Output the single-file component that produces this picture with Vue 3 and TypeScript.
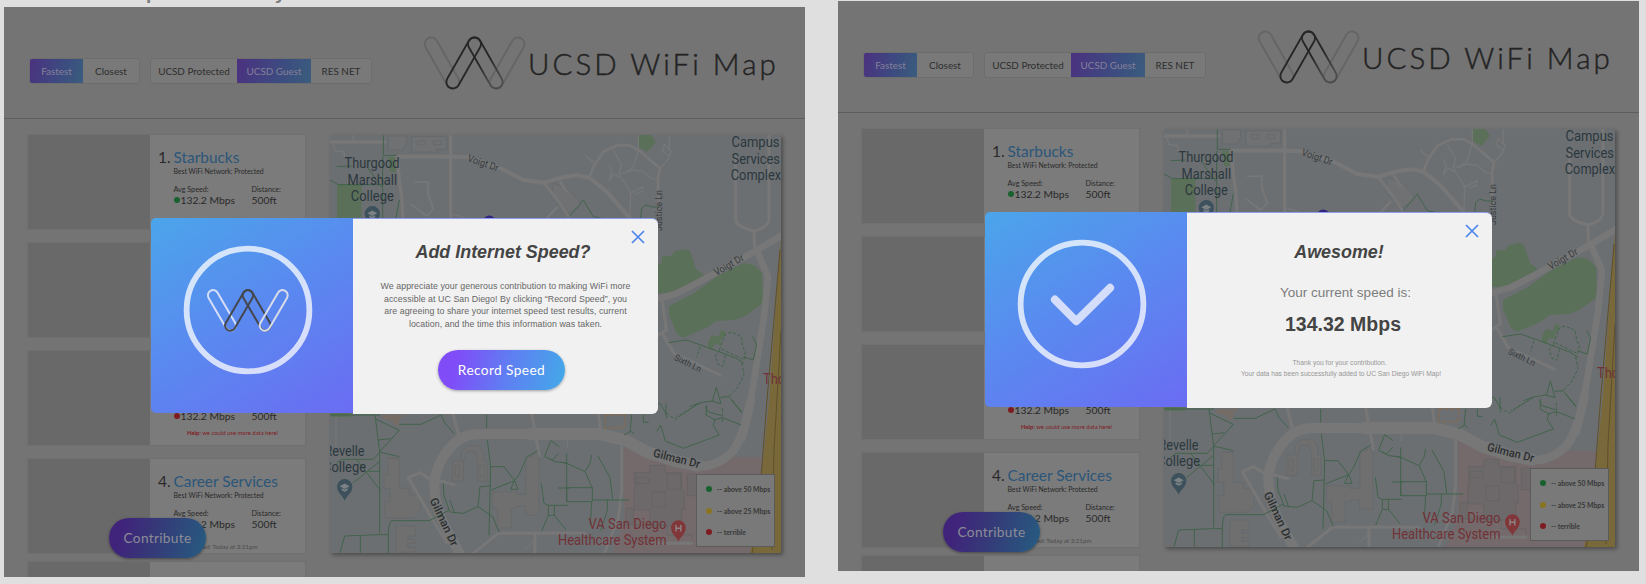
<script setup lang="ts">
interface Place {
  rank?: string
  name?: string
  network?: string
  status?: 'good' | 'fair' | 'bad'
  help?: boolean
  updated?: string
}
interface Screen {
  id: string
  kind: 'record' | 'success'
}

const screens: Screen[] = [
  { id: 'record', kind: 'record' },
  { id: 'success', kind: 'success' },
]
const places: Place[] = [
  { rank: '1.', name: 'Starbucks', network: 'Best WiFi Network: Protected', status: 'good' },
  {},
  { status: 'bad', help: true },
  { rank: '4.', name: 'Career Services', network: 'Best WiFi Network: Protected', status: 'fair', updated: 'Updated: Today at 3:21pm' },
  {},
]
const legend = [
  { status: 'good', label: '-- above 50 Mbps' },
  { status: 'fair', label: '-- above 25 Mbps' },
  { status: 'bad', label: '-- terrible' },
]
const paragraph = [
  'We appreciate your generous contribution to making WiFi more',
  'accessible at UC San Diego! By clicking “Record Speed”, you',
  'are agreeing to share your internet speed test results, current',
  'location, and the time this information was taken.',
]
</script>

<template>
  <div class="board">
    <svg class="caption" width="300" height="4" viewBox="0 0 300 4">
      <text x="146" y="-1">p</text>
      <text x="275" y="-1">y</text>
    </svg>

    <section v-for="s in screens" :key="s.id" class="screen" :class="s.kind">
      <header class="top">
        <div class="group sort">
          <span class="seg on">Fastest</span><span class="seg">Closest</span>
        </div>
        <div class="group nets">
          <span class="seg">UCSD Protected</span><span class="seg on">UCSD Guest</span><span class="seg">RES NET</span>
        </div>
        <div class="brand">
          <svg class="logo" width="104" height="54" viewBox="422.5 35.5 104 54">
            <defs>
              <linearGradient :id="'fade-' + s.id" x1="0" y1="0" x2="0" y2="1">
                <stop offset=".45" stop-color="#262626" />
                <stop offset=".85" stop-color="#4c4c4c" />
              </linearGradient>
            </defs>
            <g fill="none" stroke-width="1.8">
              <rect x="-6.5" y="-6.5" width="13" height="56.7" rx="6.5" stroke="#656565" transform="translate(430.7 43.5) rotate(-29.7)" />
              <rect x="-6.5" y="-6.5" width="13" height="56.7" rx="6.5" stroke="#656565" transform="translate(517.5 43.5) rotate(29.7)" />
              <rect x="-6.5" y="-6.5" width="13" height="56.7" rx="6.5" :stroke="'url(#fade-' + s.id + ')'" transform="translate(474 43.5) rotate(-29.7)" />
              <rect x="-6.5" y="-6.5" width="13" height="56.7" rx="6.5" stroke="#262626" transform="translate(474 43.5) rotate(29.7)" />
            </g>
          </svg>
          <span class="wordmark">UCSD WiFi Map</span>
        </div>
      </header>

      <div class="content">
        <div class="list">
          <article v-for="(p, i) in places" :key="i" class="card">
            <div class="photo"></div>
            <div class="info">
              <div class="title"><span class="rank">{{ p.rank }}</span><span class="name">{{ p.name }}</span></div>
              <div class="network">{{ p.network }}</div>
              <div v-if="p.status" class="stats">
                <div class="stat speed">
                  <span class="label">Avg Speed:</span>
                  <span class="value"><i class="dot" :class="p.status"></i>132.2 Mbps</span>
                </div>
                <div class="stat">
                  <span class="label">Distance:</span>
                  <span class="value">500ft</span>
                </div>
              </div>
              <div v-if="p.help" class="help"><b>Help</b>: we could use more data here!</div>
              <div v-if="p.updated" class="updated">{{ p.updated }}</div>
            </div>
          </article>
        </div>

        <div class="map">
          <svg width="451" height="418" viewBox="330 135 451 418">
            <rect x="330" y="135" width="451" height="418" fill="#6c6f72" />
            <!-- parks and campus areas -->
            <g fill="#5b7058">
              <path d="M337 184h24.5v50H337zM388 157h7l1 15h-6zM331 400h20v17h-20z" />
              <path d="M638 135h13l5 7-9 10-8-5z" />
              <path d="M650 267l8-2 4-3 0-6h9l4-5 11-2 4 2 6 18 8 6-2 3-9 3-11 10-13 2h-15z" />
              <path d="M669 306l25-13 25-18 25-12 10 2 8 8 1 27-1 4-17 12-10 4-19 1-8 6-25 11-6-4-8-19z" />
              <path d="M708 342l4-7 7 2 2-7 4 1 0 5-4 3 0 6-6-1-3 6-4-2z" />
            </g>
            <path d="M624 447l20 1 20 10 45 8 12-9h60v96H612l12-30z" fill="#746a6b" />
            <!-- buildings -->
            <g transform="translate(320 120) scale(.33333)" fill="#707172" stroke="#646769" stroke-width="2">
              <path d="M205 48h55v22l-10 20h-45zM275 50h105v38h-30v8h-75zM293 62h22v12h-22zM340 62h22v12h-22z" />
              <path d="M700 190l50 20 35 45-40 25-50-45z" />
            </g>
            <g transform="translate(320 400) scale(.33333)" fill="#6f6f6f" stroke="#656768" stroke-width="2">
              <path d="M203 175h35v90h30v20h32v50l-20 20h-85v-50h15v-40h-18v-40h12z" />
              <path d="M398 182h26v-25l20-20h32l15 20v25h10v62h-28v-62l-8-28h-25l-10 28v62h-32zM406 195h12v35h-12zM480 195h12v35h-12z" />
              <path d="M518 275h72v8h28v-112h20v-10h15v10h4v175h-40v-28h-26v6h-18v60h-40v-60h-16z" />
              <path d="M228 378h57v30h-22v10h22v12h-22v12h22v14h-57z" />
            </g>
            <g transform="translate(560 400) scale(.33333)" fill="#6d696a" stroke="#626162" stroke-width="2">
              <path d="M222 218h48v-22h45v22h50v55h8v55h-8v50h-95v-48h-48v-60h4zM228 232h38v18h-38zM322 222h40v45h-40zM276 275h40v45h-40zM382 222h28v65h-28zM198 325h22v50h-22z" />
              <path d="M135 45h62l-4 38h-58z" fill="none" stroke="#7b6c5e" stroke-dasharray="12 5" stroke-width="6" />
              <path d="M222 375h100v30h75v15" fill="none" />
            </g>
            <path d="M383 415h22l-5 3-2 9-8-7-7-1z" fill="#756c66" />
            <!-- freeway -->
            <path d="M781 238v315h-31l2-10 7-40 10-103z" fill="#79683a" />
            <path d="M780 250l-13 150-10 130-5 23M781 330l-7 120-2 100" fill="none" stroke="#5f5029" stroke-width="1" />
            <!-- streets -->
            <g fill="none" stroke="#777777" stroke-linecap="round" stroke-linejoin="round">
              <g transform="translate(320 120) scale(.33333)">
                <path d="M30 66h165M232 110l7 80 6 40 4 65M392 47v250" stroke-width="10" />
                <path d="M100 46v20M38 72l8 20 26 4 2 16M280 187l45-1-3 35 18 48-22 20-45-37M392 280l60 20" stroke-width="4" />
              </g>
              <g transform="translate(400 0) scale(.33333)">
                <path d="M-8 470h165l48 2 95 32 70 36 62 8 60-17 40-5 36 7 52 42 70 80" stroke-width="12" />
                <path d="M432 548l46 60 32 48M440 655l30-32M568 532l14-35 28-42 45-20 35 1 26 15 64 54-6 30 2 120M480 545l20 30" stroke-width="8" />
                <path d="M640 452l25 40-8 30 35 55-2 80M665 520l35-10 30 4 25 22 20 3M715 450l-15 50-25 20M780 505l25-28 8-22-20-22-6 20 20 15M560 470l22 18M628 497l8 15-8 30 14-20 16 10M690 580l40-20-4 14-20 8M715 407v43M808 407v40M40 548l42-2 2 30 16 50-18 22-48-35" stroke-width="4" />
              </g>
              <g transform="translate(560 120) scale(.33333)">
                <path d="M527 110v190q2 20 55 33q40-10 45-33V46M582 333l2 50" stroke-width="9" />
                <path d="M663 348l-85 50-180 98-50 25-52 15M590 390l34 80-12 120-28 180-24 140-12 45" stroke-width="20" />
                <path d="M305 530l14 100-24 16M310 645l32 55 138 65" stroke-width="9" />
              </g>
              <g transform="translate(320 400) scale(.33333)">
                <path d="M430 480l-50-90q-38-75-37-140q5-60 50-110q35-38 80-38h230" stroke-width="30" />
                <path d="M630 102h210l78 20 65 35 90 28 60 12" stroke-width="36" />
                <path d="M1120 197q70 10 120-45 30-40 52-150" stroke-width="26" />
                <path d="M400 45l16 60M636 45l22 122M835 40l8 60M905 140v130l-10 85-40 100M460 460l75-60h260M645 405v50M330 238l-30-20-35 15 75 130 40 65M350 240l52 14" stroke-width="9" />
                <path d="M48 50v90M645 420l-30 26M742 120v20" stroke-width="3" />
                <path d="M1000 430h115" stroke-width="9" />
              </g>
            </g>
            <!-- footpaths -->
            <g fill="none" stroke="#41634b" stroke-width="3">
              <g transform="translate(320 120) scale(.33333)">
                <path d="M190 46v60h40M50 140l45-2M30 180l25 14h130M142 142l44 60M188 110v185M238 240l-10 55" />
              </g>
              <g transform="translate(560 120) scale(.33333)">
                <path d="M28 290l42-50 30 50 25 5M242 295l3-30 12-10 20 6h20M325 668l55-8 62 22 85 32 26 16M578 650l12 22-10 48-30-10M388 860l35-12 34-5 12-42 14 50-28-8M482 832l25-2 38 46M250 855l50-5 15 25 6 20M436 860l8 15 40 12" />
                <path d="M478 690l18-48 18-6 30 14 4 30 8 14-4 25-30-14-38-18-18 20 8 26 14 6 10-40M420 680l-10 32M545 728l7 36-20 40-25 25M420 850l-70 40" stroke-dasharray="10 5" />
              </g>
              <g transform="translate(320 400) scale(.33333)">
                <path d="M30 45h150M165 45l14 110v245M166 57l72 34-60 65 60 14M175 120l36-4M238 73h65l60-28 12 25 28 32M50 190l15-12h95l20-22M98 250l80-65M110 178l72 95M145 214h35M60 458l14-50 104-4h27v55M205 404q0-35 10-42h113l60-32M121 406v52M500 45v40M502 120l10 80-5 205M512 200h40l32 42-70 28M584 240l-12 28h22l-10-26 14-20 22-50 32-20M512 258l-32 2-6 60-44 20-40-4-18-48-2-38M390 300l14 40M474 320l44 30 20 48M692 122l-18 48 24 10 18-20M692 122l26 18M685 175l20 10 40 5M664 250l8 60 12 6h60M685 316v30l-20 48M703 316v30l36 44M685 346h18M714 264h36" />
              </g>
              <g transform="translate(560 400) scale(.33333)">
                <path d="M0 186l20 4 55 25 22 48v42H20v-42h78M20 160v146M75 215l15-25 5-25M114 168l36 65 8 65M98 300h110M95 305l-4 70M142 300v30l-20 62M215 45l-5 50-18 10M210 92l12 10M250 45v22h16M290 95l12-20 14 48 54 22 108-40-18-28 4-18 24-6 55 22M440 15l-2 30 28 15M515 0l30 38M318 10v30" />
                <path d="M318 40l28 18 70-48M487 25v40" stroke-dasharray="10 5" />
              </g>
            </g>
            <!-- labels -->
            <g class="place">
              <text x="344.6" y="168.3" textLength="55" lengthAdjust="spacingAndGlyphs">Thurgood</text>
              <text x="347.6" y="184.5" textLength="49.5" lengthAdjust="spacingAndGlyphs">Marshall</text>
              <text x="350.8" y="200.8" textLength="43" lengthAdjust="spacingAndGlyphs">College</text>
              <text x="731.5" y="147.3" textLength="48" lengthAdjust="spacingAndGlyphs">Campus</text>
              <text x="731.5" y="163.5" textLength="48.5" lengthAdjust="spacingAndGlyphs">Services</text>
              <text x="730.8" y="179.8" textLength="50.2" lengthAdjust="spacingAndGlyphs">Complex</text>
              <text x="324.5" y="456" textLength="40" lengthAdjust="spacingAndGlyphs">Revelle</text>
              <text x="323" y="472.2" textLength="43" lengthAdjust="spacingAndGlyphs">College</text>
            </g>
            <g class="place medical">
              <text x="588.5" y="529" textLength="78" lengthAdjust="spacingAndGlyphs">VA San Diego</text>
              <text x="558" y="545" textLength="108.5" lengthAdjust="spacingAndGlyphs">Healthcare System</text>
              <text x="763" y="383.5" textLength="52" lengthAdjust="spacingAndGlyphs">Thornton</text>
            </g>
            <g class="street">
              <text transform="translate(467 161) rotate(19)" font-size="10" textLength="32" lengthAdjust="spacingAndGlyphs">Voigt Dr</text>
              <text transform="translate(716.5 276) rotate(-30)" font-size="10" textLength="32.5" lengthAdjust="spacingAndGlyphs">Voigt Dr</text>
              <text transform="translate(673.5 359.5) rotate(26)" font-size="9" textLength="29" lengthAdjust="spacingAndGlyphs">Sixth Ln</text>
              <text transform="translate(662 231) rotate(-90)" font-size="8.5" textLength="41" lengthAdjust="spacingAndGlyphs">Justice Ln</text>
              <text class="major" transform="translate(652.5 456.5) rotate(14)" textLength="48" lengthAdjust="spacingAndGlyphs">Gilman Dr</text>
              <text class="major" transform="translate(429.5 500) rotate(65)" textLength="52" lengthAdjust="spacingAndGlyphs">Gilman Dr</text>
            </g>
            <!-- pins -->
            <g v-for="pin in [{ x: 344.7, y: 487.5 }, { x: 372.3, y: 214.5 }]" :key="pin.x" :transform="'translate(' + pin.x + ' ' + pin.y + ')'">
              <path d="M0 13.5C-1.5 8-7.6 6-7.6-1A7.6 7.6 0 0 1 7.6-1C7.6 6 1.5 8 0 13.5z" fill="#3c515b" />
              <path d="M-5-1.3L0-4l5 2.7L0 1.4zM-3 .7L0 2.3 3 .7v2L0 4.3-3 2.7z" fill="#7b8184" />
            </g>
            <path d="M678.4 541.8c-1.3-5-7.4-7-7.4-14.2a7.4 7.4 0 0 1 14.8 0c0 7.2-6 9.2-7.4 14.2z" fill="#81373a" />
            <path d="M676 525v6.6M680.8 525v6.6M676 528.3h4.8" stroke="#8c8585" stroke-width="1.4" />
            <circle cx="489.3" cy="222" r="6.4" fill="#34267e" />
          </svg>
          <ul class="legend">
            <li v-for="l in legend" :key="l.label"><i class="dot" :class="l.status"></i>{{ l.label }}</li>
          </ul>
        </div>
      </div>

      <button class="contribute">Contribute</button>

      <div class="modal">
        <div class="hero">
          <svg width="201" height="195" viewBox="151.5 218 201 195">
            <circle cx="248.5" cy="310" r="61.4" fill="none" stroke="#fff" stroke-opacity=".75" stroke-width="5.8" />
            <g v-if="s.kind === 'record'" fill="none" stroke-width="2">
              <rect x="-5.2" y="-5.2" width="10.4" height="45.4" rx="5.2" stroke="#d5def8" transform="translate(213.6 295.3) rotate(-30.3)" />
              <rect x="-5.2" y="-5.2" width="10.4" height="45.4" rx="5.2" stroke="#45474f" transform="translate(248.4 295.3) rotate(-30.3)" />
              <rect x="-5.2" y="-5.2" width="10.4" height="45.4" rx="5.2" stroke="#45474f" transform="translate(248.4 295.3) rotate(30.3)" />
              <rect x="-5.2" y="-5.2" width="10.4" height="45.4" rx="5.2" stroke="#d8dbe8" transform="translate(283 295.3) rotate(30.3)" />
            </g>
            <path v-else d="M221.4 305.6l21.4 21.6 33.8-33.4" fill="none" stroke="#d4defb" stroke-width="8" stroke-linecap="round" stroke-linejoin="round" />
          </svg>
        </div>
        <div class="body">
          <svg class="close" width="14" height="14" viewBox="0 0 14 14"><path d="M1 1l12 12M13 1L1 13" stroke="#4c86ec" stroke-width="1.7" /></svg>
          <template v-if="s.kind === 'record'">
            <h2>Add Internet Speed?</h2>
            <p class="copy"><span v-for="line in paragraph" :key="line">{{ line }}</span></p>
            <button class="record-btn">Record Speed</button>
          </template>
          <template v-else>
            <h2>Awesome!</h2>
            <p class="lead">Your current speed is:</p>
            <p class="result">134.32 Mbps</p>
            <p class="thanks first">Thank you for your contribution.</p>
            <p class="thanks">Your data has been successfully added to UC San Diego WiFi Map!</p>
          </template>
        </div>
      </div>
    </section>
  </div>
</template>

<style>
body {
  background: #dfdfdf;
  overflow: hidden;
}
</style>

<style scoped>
.board {
  position: relative;
  display: flex;
  gap: 33px;
  height: 584px;
  padding-left: 4px;
  box-sizing: border-box;
  background: #dfdfdf;
  font-family: Lato, "Liberation Sans", sans-serif;
}
.caption {
  position: absolute;
  left: 0;
  top: 0;
  font: bold 19px "Liberation Sans", sans-serif;
  fill: #7d7d7d;
}
.screen {
  position: relative;
  flex: none;
  width: 801px;
  height: 570px;
  margin-top: 7px;
  overflow: hidden;
  background: #747474;
}
.screen.success {
  margin-top: 1px;
}
.top {
  display: flex;
  align-items: flex-start;
  border-bottom: 1px solid #5d5d5d;
  box-sizing: border-box;
  height: 112px;
  padding-left: 25px;
}
.group {
  display: flex;
  margin-top: 51px;
  border: 1px solid #6d6d6d;
  border-radius: 3px;
  overflow: hidden;
  background: #797979;
  height: 26px;
  box-sizing: border-box;
}
.sort {
  width: 111px;
}
.nets {
  width: 222px;
  margin-left: 10px;
}
.seg {
  flex: none;
  display: flex;
  align-items: center;
  justify-content: center;
  font-size: 9.9px;
  white-space: nowrap;
  color: #2e2e2e;
}
.sort .seg {
  width: 53px;
}
.sort .seg + .seg {
  width: 56px;
}
.nets .seg {
  width: 86px;
}
.nets .seg:nth-child(2) {
  width: 74px;
}
.nets .seg:nth-child(3) {
  width: 60px;
}
.seg.on {
  color: #85809a;
  background: linear-gradient(105deg, #4b3180, #3c4c80 60%, #3a5d7d);
}
.brand {
  display: flex;
  margin: 29px 0 0 51px;
}
.logo {
  flex: none;
}
.wordmark {
  margin: 7px 0 0 1px;
  font-size: 29.5px;
  line-height: 41px;
  font-weight: 300;
  letter-spacing: 3.05px;
  color: #232323;
  -webkit-text-stroke: 0.45px #232323;
  white-space: nowrap;
}
.content {
  display: flex;
  padding: 16px 0 0 24px;
}
.list {
  display: flex;
  flex-direction: column;
  gap: 14px;
  width: 277px;
}
.card {
  display: flex;
  flex: none;
  height: 94px;
  background: #7b7b7b;
  box-shadow: 0 0 1px 1px #707070;
}
.card:last-child {
  margin-top: -5px;
}
.photo {
  flex: none;
  width: 122px;
  background: #696969;
}
.info {
  flex: 1;
  padding: 12px 0 0 8px;
  color: #292929;
  white-space: nowrap;
}
.title {
  display: flex;
  height: 20px;
  font-size: 15.4px;
  line-height: 20px;
}
.rank {
  width: 15.5px;
}
.name {
  color: #2b567a;
}
.network {
  height: 11px;
  padding-left: 15.5px;
  font-size: 6.85px;
  line-height: 9px;
}
.stats {
  display: flex;
  padding: 7px 0 0 15.5px;
}
.stat {
  display: flex;
  flex-direction: column;
}
.speed {
  width: 78px;
}
.label {
  font-size: 7.2px;
  line-height: 9px;
}
.value {
  display: flex;
  align-items: center;
  font-size: 10.3px;
  line-height: 12px;
}
.dot {
  flex: none;
  display: inline-block;
  width: 6px;
  height: 6px;
  margin-right: 1px;
  border-radius: 50%;
}
.dot.good { background: #19612f; }
.dot.fair { background: #8a7420; }
.dot.bad { background: #7d1d22; }
.help {
  padding: 7px 0 0 29px;
  font-size: 5.9px;
  line-height: 8px;
  color: #7f2023;
}
.updated {
  padding: 13px 0 0 28px;
  font-size: 6.2px;
  line-height: 8px;
  color: #4b4b4b;
}
.map {
  position: relative;
  width: 451px;
  height: 418px;
  margin-left: 25px;
  box-shadow: 2px 2px 4px rgba(0, 0, 0, 0.35);
}
.map > svg {
  display: block;
}
.place {
  font: 14.5px Roboto, sans-serif;
  fill: #2b383e;
}
.medical {
  fill: #713136;
}
.street {
  font-family: Roboto, sans-serif;
  fill: #363b3e;
}
.major {
  font-size: 11.5px;
  font-weight: 500;
  fill: #2b2f31;
}
.legend {
  position: absolute;
  left: 366px;
  top: 339px;
  width: 79px;
  height: 73px;
  box-sizing: border-box;
  margin: 0;
  padding: 3px 0 0 9px;
  border: 1px solid #5b5b5b;
  background: #797979;
  list-style: none;
  font-size: 6.8px;
  font-weight: bold;
  color: #373737;
}
.legend li {
  display: flex;
  align-items: center;
  height: 21.7px;
  white-space: nowrap;
}
.legend .dot {
  margin-right: 5px;
}
.contribute,
.record-btn {
  border: 0;
  padding: 0 0 2px;
  border-radius: 20px;
  font-family: inherit;
}
.contribute {
  position: absolute;
  left: 105px;
  top: 511px;
  width: 97px;
  height: 40px;
  font-size: 13.7px;
  letter-spacing: 0.3px;
  color: #8c8c96;
  background: linear-gradient(105deg, #40247b 15%, #343b78 50%, #265c80);
  box-shadow: 0 1px 3px rgba(0, 0, 0, 0.4);
}
.modal {
  position: absolute;
  left: 147px;
  top: 211px;
  display: flex;
  width: 507px;
  height: 196px;
}
.hero {
  flex: none;
  width: 202px;
  height: 195px;
  border-radius: 5px 0 0 5px;
  background: linear-gradient(148deg, #4ba5ea, #5b87f0 52%, #6b6cf2);
}
.hero svg {
  display: block;
}
.body {
  position: relative;
  flex: 1;
  display: flex;
  flex-direction: column;
  align-items: center;
  box-sizing: border-box;
  height: 196px;
  border-top: 1px solid #8d9cee;
  border-radius: 0 6px 6px 0;
  background: #f1f1f1;
  font-family: "Liberation Sans", Arial, sans-serif;
  white-space: nowrap;
}
.close {
  position: absolute;
  right: 13px;
  top: 11px;
}
h2 {
  margin: 22px 0 0 -5px;
  font-size: 17.9px;
  line-height: 22px;
  font-style: italic;
  font-weight: bold;
  color: #444;
}
.copy {
  display: flex;
  flex-direction: column;
  align-items: center;
  margin: 17px 0 0;
  font-size: 8.8px;
  letter-spacing: 0.06px;
  line-height: 12.6px;
  color: #666;
}
.record-btn {
  width: 127px;
  height: 40px;
  margin: 20px 0 0 -8px;
  font-family: Lato, sans-serif;
  font-size: 13.7px;
  letter-spacing: 0.4px;
  color: #fff;
  background: linear-gradient(105deg, #804cf8 15%, #5f7ff2 55%, #42aae8);
  box-shadow: 0 1px 3px rgba(0, 0, 0, 0.35);
}
.success h2 {
  margin-top: 28px;
  margin-left: -1px;
}
.lead {
  margin: 21px 0 0 12px;
  font-size: 13.5px;
  line-height: 18px;
  color: #7c7c7c;
}
.result {
  margin: 10px 0 0 7px;
  font-size: 19.5px;
  line-height: 24px;
  font-weight: bold;
  color: #444;
}
.thanks {
  margin: 0 0 0 3px;
  font-size: 6.7px;
  line-height: 11px;
  color: #979797;
}
.thanks.first {
  margin-top: 21px;
  margin-left: 0;
}
</style>
